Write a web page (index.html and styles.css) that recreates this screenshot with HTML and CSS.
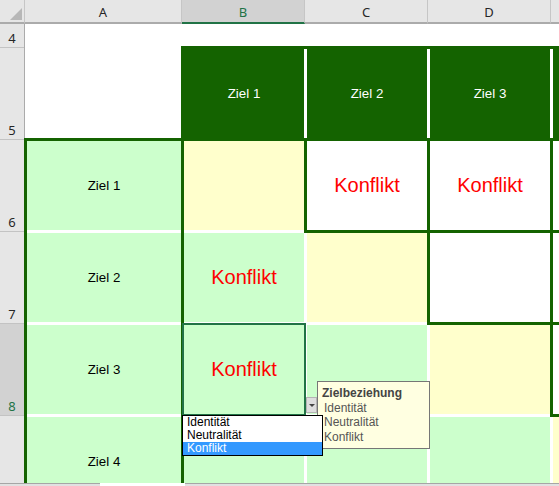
FILE: index.html
```html
<!DOCTYPE html>
<html lang="de">
<head>
    <meta charset="UTF-8">
    <title>Zielbeziehungsmatrix</title>
    <link rel="stylesheet" href="styles.css">
</head>
<body>
<div class="sheet">
    <div class="colheads">
        <div class="corner"><span class="tri"></span></div>
        <div class="ch ch-a">A</div>
        <div class="ch sel">B</div>
        <div class="ch">C</div>
        <div class="ch">D</div>
        <div class="ch"></div>
    </div>

    <div class="body">
        <div class="rowheads">
            <div class="rh r4">4</div>
            <div class="rh">5</div>
            <div class="rh">6</div>
            <div class="rh">7</div>
            <div class="rh sel">8</div>
            <div class="rh"></div>
        </div>

        <div class="cells">
            <!-- row 4 -->
            <div></div><div></div><div></div><div></div><div></div>

            <!-- row 5 -->
            <div></div>
            <div class="hdr">
                <div>Ziel 1</div>
                <div>Ziel 2</div>
                <div>Ziel 3</div>
                <div></div>
            </div>

            <!-- rows 6-9, column A -->
            <div class="goals">
                <div>Ziel 1</div>
                <div>Ziel 2</div>
                <div>Ziel 3</div>
                <div>Ziel 4</div>
            </div>

            <!-- row 6 -->
            <div class="c diag"></div>
            <div class="c up">Konflikt</div>
            <div class="c up">Konflikt</div>
            <div class="c up"></div>

            <!-- row 7 -->
            <div class="c low">Konflikt</div>
            <div class="c diag"></div>
            <div class="c up"></div>
            <div class="c up"></div>

            <!-- row 8 -->
            <div class="c low active">Konflikt</div>
            <div class="c low"></div>
            <div class="c diag"></div>
            <div class="c up"></div>

            <!-- row 9 -->
            <div class="c low"></div>
            <div class="c low"></div>
            <div class="c low"></div>
            <div class="c diag"></div>
        </div>
    </div>

    <div class="tabs">
        <div class="tab-nav"></div>
        <div class="tab-active"></div>
        <div class="tab-rest"></div>
    </div>

    <div class="dd-btn"><span></span></div>

    <div class="tip">
        <div class="tip-title">Zielbeziehung</div>
        <div class="tip-item">Identität</div>
        <div class="tip-item">Neutralität</div>
        <div class="tip-item">Konflikt</div>
    </div>

    <div class="dd-list">
        <div class="dd-item">Identität</div>
        <div class="dd-item">Neutralität</div>
        <div class="dd-item hl">Konflikt</div>
    </div>
</div>
</body>
</html>
```

FILE: styles.css
```css
* {
    box-sizing: border-box;
}

body {
    margin: 0;
    background: #fff;
    font-family: "Liberation Sans", Arial, sans-serif;
}

.sheet {
    position: relative;
    width: 559px;
    height: 486px;
    overflow: hidden;
}

/* column headers */
.colheads {
    display: flex;
    height: 24px;
    background: #e6e6e6;
    font-family: "Noto Sans", sans-serif;
    font-size: 13px;
    color: #262626;
}

.corner {
    flex: none;
    width: 25px;
    display: flex;
    justify-content: flex-end;
    align-items: flex-end;
    padding: 0 2px 2px 0;
    border-right: 1px solid #c6c6c6;
    border-bottom: 2px solid #ababab;
}

.tri {
    width: 0;
    height: 0;
    border-left: 12px solid transparent;
    border-bottom: 12px solid #b7b7b7;
}

.ch {
    flex: none;
    width: 123px;
    padding-top: 3px;
    line-height: 19px;
    text-align: center;
    border-right: 1px solid #c6c6c6;
    border-bottom: 2px solid #ababab;
}

.ch-a {
    width: 157px;
}

.ch.sel {
    background: #d2d2d2;
    color: #217346;
    border-bottom-color: #217346;
}

/* row headers + cells */
.body {
    display: flex;
    height: 459px;
    overflow: hidden;
}

.rowheads {
    flex: none;
    width: 25px;
    background: #e6e6e6;
    border-right: 1px solid #ababab;
    font-family: "Noto Sans", sans-serif;
    font-size: 13px;
    color: #262626;
}

.rh {
    height: 92px;
    display: flex;
    align-items: flex-end;
    justify-content: center;
    padding-bottom: 2px;
    line-height: 14px;
    border-bottom: 1px solid #c3c3c3;
}

.rh.r4 {
    height: 24px;
}

.rh.sel {
    background: #d2d2d2;
    color: #217346;
}

.cells {
    flex: none;
    display: grid;
    grid-template-columns: 154px repeat(4, 120px);
    grid-template-rows: 22px repeat(5, 89px);
    gap: 3px;
    padding-left: 2px;
    background: #fff;
}

.hdr {
    grid-column: span 4;
    display: flex;
    gap: 3px;
    outline: 3px solid #146300;
    z-index: 1;
}

.hdr div {
    flex: none;
    width: 120px;
    display: flex;
    align-items: center;
    justify-content: center;
    background: #146300;
    color: #fff;
    font-size: 13.33px;
}

.goals {
    grid-row: span 4;
    display: grid;
    grid-template-rows: repeat(4, 89px);
    gap: 3px;
    outline: 3px solid #146300;
    z-index: 1;
}

.goals div {
    display: flex;
    align-items: center;
    justify-content: center;
    background: #ccffcc;
    color: #000;
    font-size: 13.33px;
}

.goals div:last-child {
    align-items: flex-start;
    padding-top: 37px;
}

.c {
    display: flex;
    align-items: center;
    justify-content: center;
    color: #ff0000;
    font-size: 20px;
}

.diag {
    background: #ffffcc;
}

.low {
    background: #ccffcc;
}

.up {
    background: #fff;
    outline: 3px solid #146300;
    z-index: 1;
}

.active {
    outline: 2px solid #217346;
    z-index: 2;
}

/* sheet tab strip at the bottom */
.tabs {
    display: flex;
    height: 3px;
}

.tab-nav {
    width: 100px;
    background: #e1e1e1;
    border-top: 1px solid #a6a6a6;
}

.tab-active {
    width: 85px;
    background: #fff;
}

.tab-rest {
    flex: 1;
    background: #e1e1e1;
    border-top: 1px solid #a6a6a6;
}

/* data validation: dropdown button, input message, open list */
.dd-btn {
    position: absolute;
    left: 306px;
    top: 397px;
    width: 11px;
    height: 16px;
    display: flex;
    align-items: center;
    justify-content: center;
    padding-left: 1px;
    background: #dedede;
    border: 1px solid #b4b4b4;
    z-index: 5;
}

.dd-btn span {
    width: 0;
    height: 0;
    border-left: 3px solid transparent;
    border-right: 3px solid transparent;
    border-top: 3px solid #444;
}

.tip {
    position: absolute;
    left: 317px;
    top: 381px;
    width: 113px;
    height: 68px;
    padding: 4px;
    background: #ffffe1;
    border: 1px solid #767676;
    font-size: 12px;
    line-height: 14.5px;
    color: #555;
    z-index: 5;
}

.tip-title {
    font-weight: bold;
    color: #444;
}

.tip-item {
    padding-left: 2px;
}

.dd-list {
    position: absolute;
    left: 182px;
    top: 415px;
    width: 141px;
    background: #fff;
    border: 1px solid #000;
    font-size: 12px;
    line-height: 13px;
    color: #000;
    z-index: 6;
}

.dd-item {
    padding-left: 4px;
}

.dd-item.hl {
    background: #3399ff;
    color: #fff;
}
```
